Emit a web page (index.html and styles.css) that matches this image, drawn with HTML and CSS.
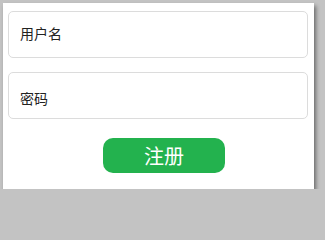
FILE: index.html
```html
<!DOCTYPE html>
<html>
<head>
<meta charset="utf-8">
<link rel="stylesheet" href="styles.css">
</head>
<body>
<div class="panel">
  <div class="field field-user"><span class="label">用户名</span></div>
  <div class="field field-pass"><span class="label">密码</span></div>
  <div class="actions"><button class="btn">注册</button></div>
</div>
</body>
</html>
```
FILE: styles.css
```css
html, body {
  margin: 0;
  padding: 0;
  background: #c3c3c3;
  font-family: "Noto Sans CJK SC", "Noto Sans", sans-serif;
}
.panel {
  margin: 3px 0 0 3px;
  width: 311px;
  height: 186px;
  box-sizing: border-box;
  background: #fff;
  padding: 8px 6px 0 5px;
  box-shadow: 2px 3px 4px rgba(0, 0, 0, 0.45);
  display: flex;
  flex-direction: column;
}
.field {
  width: 300px;
  height: 47px;
  box-sizing: border-box;
  border: 1px solid #dcdcdc;
  border-radius: 5px;
  display: flex;
  align-items: center;
  padding-left: 11px;
}
.field-user {
  padding-bottom: 4px;
}
.field-pass {
  margin-top: 14px;
  padding-top: 4px;
}
.label {
  font-size: 14px;
  color: #222;
}
.actions {
  margin-top: 19px;
  padding-left: 95px;
}
.btn {
  width: 122px;
  height: 35px;
  border: none;
  border-radius: 10px;
  background: #23b24e;
  color: #fff;
  font-family: "Noto Sans CJK SC", sans-serif;
  font-size: 20px;
  padding: 0;
  line-height: 33px;
}
```
